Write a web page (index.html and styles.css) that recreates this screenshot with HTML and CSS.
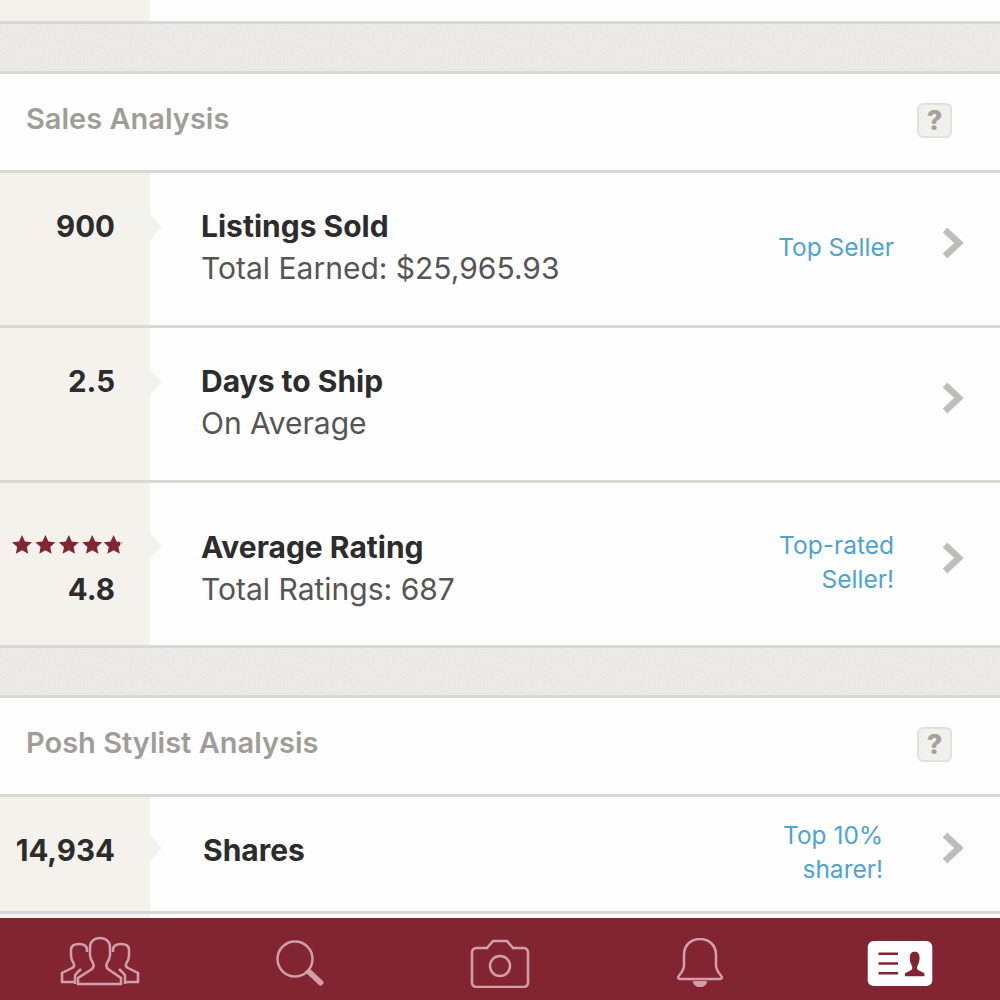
FILE: index.html
```html
<!DOCTYPE html>
<html lang="en">
<head>
  <meta charset="UTF-8" />
  <meta name="viewport" content="width=device-width, initial-scale=1.0" />
  <title>Seller Stats</title>
  <link rel="stylesheet" href="styles.css">
</head>
<body>
  <main class="content">
    <div class="row-stub"><div class="stub-col"></div></div>
    <div class="band"></div>

    <section class="panel">
      <div class="panel-head">
        <h2>Sales Analysis</h2>
        <span class="help">?</span>
      </div>
      <div class="row row-tall">
        <div class="stat-col"><b>900</b></div>
        <div class="info">
          <div class="title">Listings Sold</div>
          <div class="sub">Total Earned: $25,965.93</div>
        </div>
        <div class="badge">Top Seller</div>
        <svg class="chev" viewBox="0 0 22 32"><path d="M3 3l14 13L3 29" /></svg>
      </div>
      <div class="row row-tall">
        <div class="stat-col"><b>2.5</b></div>
        <div class="info">
          <div class="title">Days to Ship</div>
          <div class="sub">On Average</div>
        </div>
        <svg class="chev" viewBox="0 0 22 32"><path d="M3 3l14 13L3 29" /></svg>
      </div>
      <div class="row row-rating">
        <div class="stat-col stat-rating">
          <svg class="stars" viewBox="0 0 112 20">
            <defs>
              <linearGradient id="part">
                <stop offset="0.8" stop-color="#832433" />
                <stop offset="0.8" stop-color="#b9b5b0" />
              </linearGradient>
            </defs>
            <path id="s" d="M11 1l3 6.400 7 .8-5.200 4.700 1.400 6.900L11 16.300 4.800 19.800l1.400-6.900L1 8.200l7-.8z" />
            <use href="#s" x="23.400" />
            <use href="#s" x="46.800" />
            <use href="#s" x="70.200" />
            <path fill="url(#part)" transform="translate(91.600)" d="M11 1l3 6.400 7 .8-5.200 4.700 1.400 6.900L11 16.300 4.800 19.800l1.400-6.900L1 8.200l7-.8z" />
          </svg>
          <b>4.8</b>
        </div>
        <div class="info">
          <div class="title">Average Rating</div>
          <div class="sub">Total Ratings: 687</div>
        </div>
        <div class="badge">Top-rated<br>Seller!</div>
        <svg class="chev" viewBox="0 0 22 32"><path d="M3 3l14 13L3 29" /></svg>
      </div>
    </section>

    <div class="band band-mid"></div>

    <section class="panel">
      <div class="panel-head">
        <h2>Posh Stylist Analysis</h2>
        <span class="help">?</span>
      </div>
      <div class="row row-short">
        <div class="stat-col"><b>14,934</b></div>
        <div class="info">
          <div class="title title-solo">Shares</div>
        </div>
        <div class="badge badge-shift">Top 10%<br>sharer!</div>
        <svg class="chev" viewBox="0 0 22 32"><path d="M3 3l14 13L3 29" /></svg>
      </div>
      <div class="row-tail"><div class="stub-col"></div></div>
    </section>
  </main>

  <nav class="tabbar">
    <a class="tab tab-up">
      <svg width="80" height="50" viewBox="0 0 80 50">
        <path class="ico" d="M18 48v-6l14-9c2-2 2-4 1-6-2-3-3-5-3-8v-8c0-5 4-9 10-9s10 4 10 9v8c0 3-1 5-3 8-1 2-1 4 1 6l13 9v6z" />
        <path class="ico" d="M27 16v-2c0-4-3-6-8-6s-8 2-8 6v6c0 3 1 5 3 8 .6 2 0 3-2 4l-10 5v9h14" />
        <path class="ico" d="M53 16v-2c0-4 3-6 8-6s8 2 8 6v6c0 3-1 5-3 8-.6 2 0 3 2 4l10 5v9H64" />
        <path class="ico" d="M15 48v-8c0-2 3-4 6-7M65 48v-8c0-2-3-4-6-7" />
      </svg>
    </a>
    <a class="tab tab-up">
      <svg width="48" height="46" viewBox="0 0 48 46">
        <circle class="ico" cx="19" cy="19" r="17.500" />
        <path class="ico-fill" d="M29 32l4-4 14 13c1 1 1 2 0 3l-1 1c-1 1-2 1-3 0z" />
      </svg>
    </a>
    <a class="tab">
      <svg width="60" height="50" viewBox="0 0 60 50">
        <path class="ico" d="M6 10h11l6-7h14l6 7h11c2 0 4 2 4 4v31c0 2-2 4-4 4H6c-2 0-4-2-4-4V14c0-2 2-4 4-4z" />
        <circle class="ico" cx="30" cy="28" r="10" />
      </svg>
    </a>
    <a class="tab">
      <svg width="48" height="50" viewBox="0 1 48 50">
        <path class="ico" d="M2 40c0-1 6-5 6-12V18C8 8 15 2 24 2s16 6 16 16v10c0 7 6 11 6 12 0 1-1 2-2 2H4c-1 0-2-1-2-2z" />
        <path class="ico-fill" d="M17 44h14c0 4-3 6-7 6s-7-2-7-6z" />
      </svg>
    </a>
    <a class="tab tab-up">
      <svg width="66" height="45" viewBox="0 0 66 46">
        <rect class="card" width="66" height="46" rx="6" />
        <path class="card-line" d="M11 13h20M11 23h20M11 33h20" />
        <path class="card-fig" d="M38 33l6-3c2-1 2-3 1-5-1-2-2-4-2-8 0-4 2-6 5-6s5 2 5 6c0 4-1 6-2 8-1 2-1 4 1 5l6 3v3H38z" />
      </svg>
    </a>
  </nav>
</body>
</html>
```

FILE: styles.css
```css
* {
  box-sizing: border-box;
}
html, body {
  margin: 0;
  height: 1000px;
  overflow: hidden;
}
body {
  display: flex;
  flex-direction: column;
  font-family: "Inter", "Liberation Sans", sans-serif;
  background-color: #fdfdfd;
}
.content {
  flex: 1;
  overflow: hidden;
}
.row-stub {
  height: 24px;
  border-bottom: 3px solid #dad8d3;
}
.stub-col {
  width: 150px;
  height: 100%;
  background-color: #f5f2ee;
}
.band {
  height: 47px;
  background-color: #e8e5e1;
  background-image: url("data:image/svg+xml,%3Csvg xmlns='http://www.w3.org/2000/svg' width='200' height='50'%3E%3Cfilter id='n'%3E%3CfeTurbulence type='fractalNoise' baseFrequency='.7' numOctaves='2'/%3E%3CfeColorMatrix values='0 0 0 0 1 0 0 0 0 1 0 0 0 0 1 0 0 0 .5 -.1'/%3E%3C/filter%3E%3Crect width='200' height='50' filter='url(%23n)'/%3E%3C/svg%3E");
}
.band-mid {
  height: 50px;
  border-top: 3px solid #dad8d3;
}
.panel {
  border-top: 3px solid #dad8d3;
}
.panel-head {
  height: 99px;
  border-bottom: 3px solid #dad8d3;
  display: flex;
  align-items: center;
  justify-content: space-between;
  padding: 0 48px 8px 26px;
}
h2 {
  margin: 0;
  font-size: 29px;
  font-weight: 600;
  color: #a09d98;
}
.help {
  width: 35px;
  height: 35px;
  border-radius: 6px;
  border: 2px solid #e4e1dc;
  background-color: #f2f0ec;
  color: #a5a29e;
  font-size: 27px;
  font-weight: 800;
  display: flex;
  align-items: center;
  justify-content: center;
  margin-top: 5px;
}
.row {
  display: flex;
  align-items: stretch;
  border-bottom: 3px solid #dad8d3;
}
.row-tall {
  height: 155px;
}
.row-rating {
  height: 162px;
  border-bottom: 0;
}
.row-short {
  height: 117px;
}
.row-tail {
  height: 4px;
}
.stat-col {
  position: relative;
  width: 150px;
  flex: none;
  background-color: #f5f2ee;
  padding: 35px 35px 0 0;
  text-align: right;
  color: #2c2c2c;
  font-size: 29.500px;
}
/* notch pointing at the row */
.stat-col::after {
  content: "";
  position: absolute;
  left: 150px;
  top: 41px;
  border-left: 12px solid #f5f2ee;
  border-top: 13px solid transparent;
  border-bottom: 13px solid transparent;
}
.stat-rating {
  padding-top: 88px;
}
.stat-rating::after {
  top: 50px;
}
.stars {
  position: absolute;
  left: 11px;
  top: 51px;
  width: 112px;
  height: 20px;
  fill: #832433;
}
.row-short .stat-col::after {
  top: 38px;
}
.info {
  flex: 1;
  padding: 33px 0 0 51px;
  color: #2c2c2c;
}
.row-rating .info {
  padding-top: 44px;
}
.title {
  font-size: 30px;
  font-weight: 700;
  line-height: 41px;
}
.title-solo {
  margin-left: 2px;
}
.sub {
  font-size: 30px;
  color: #555;
  line-height: 42px;
}
.badge {
  align-self: center;
  color: #4fa3d1;
  font-size: 24.500px;
  line-height: 34px;
  text-align: right;
  margin: 0 48px 5px 0;
}
.badge-shift {
  margin-right: 59px;
}
.chev {
  align-self: center;
  flex: none;
  width: 22px;
  height: 32px;
  margin: 0 36px 12px 0;
  fill: none;
  stroke: #bfbdb8;
  stroke-width: 6.500;
}
.tabbar {
  height: 82px;
  flex: none;
  background-color: #832433;
  display: grid;
  grid-template-columns: repeat(5, 200px);
  align-items: end;
  justify-items: center;
  padding-bottom: 12px;
}
.tab {
  display: flex;
}
.tab-up {
  margin-bottom: 2px;
}
.ico {
  fill: none;
  stroke: #d19fa9;
  stroke-width: 2.500;
}
.ico-fill {
  fill: #d19fa9;
}
.card {
  fill: #fff;
}
.card-line {
  stroke: #832433;
  stroke-width: 2.500;
  fill: none;
}
.card-fig {
  fill: #832433;
}
```
